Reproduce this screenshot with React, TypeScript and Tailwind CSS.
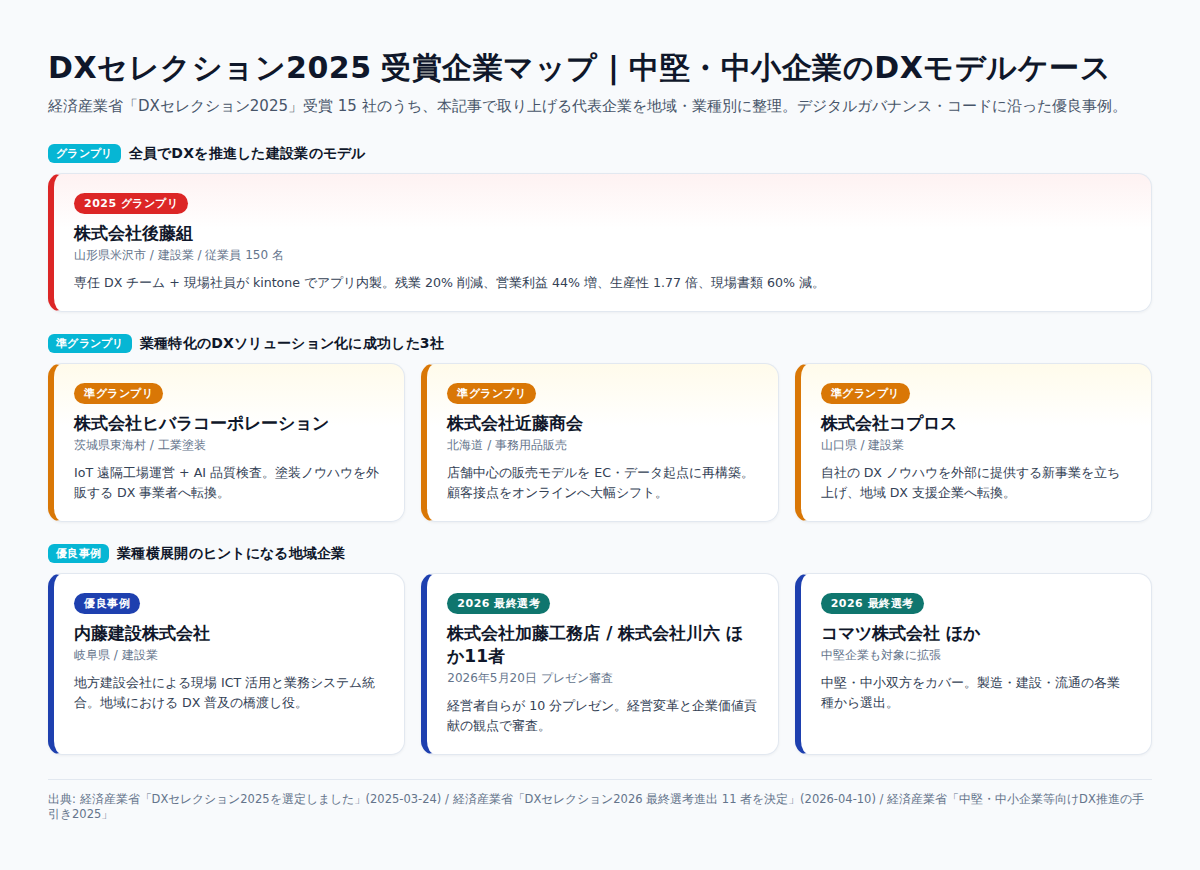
const font = 'font-["DejaVu_Sans",sans-serif]';

type Card = {
  tag: string;
  tagColor: string;
  name: string;
  meta: string;
  desc: string;
};

const finalists: Card[] = [
  {
    tag: '優良事例',
    tagColor: 'bg-[#1e40af]',
    name: '内藤建設株式会社',
    meta: '岐阜県 / 建設業',
    desc: '地方建設会社による現場 ICT 活用と業務システム統合。地域における DX 普及の橋渡し役。',
  },
  {
    tag: '2026 最終選考',
    tagColor: 'bg-[#0f766e]',
    name: '株式会社加藤工務店 / 株式会社川六 ほか11者',
    meta: '2026年5月20日 プレゼン審査',
    desc: '経営者自らが 10 分プレゼン。経営変革と企業価値貢献の観点で審査。',
  },
  {
    tag: '2026 最終選考',
    tagColor: 'bg-[#0f766e]',
    name: 'コマツ株式会社 ほか',
    meta: '中堅企業も対象に拡張',
    desc: '中堅・中小双方をカバー。製造・建設・流通の各業種から選出。',
  },
];

const runnersUp: Card[] = [
  {
    tag: '準グランプリ',
    tagColor: 'bg-[#d97706]',
    name: '株式会社ヒバラコーポレーション',
    meta: '茨城県東海村 / 工業塗装',
    desc: 'IoT 遠隔工場運営 + AI 品質検査。塗装ノウハウを外販する DX 事業者へ転換。',
  },
  {
    tag: '準グランプリ',
    tagColor: 'bg-[#d97706]',
    name: '株式会社近藤商会',
    meta: '北海道 / 事務用品販売',
    desc: '店舗中心の販売モデルを EC・データ起点に再構築。顧客接点をオンラインへ大幅シフト。',
  },
  {
    tag: '準グランプリ',
    tagColor: 'bg-[#d97706]',
    name: '株式会社コプロス',
    meta: '山口県 / 建設業',
    desc: '自社の DX ノウハウを外部に提供する新事業を立ち上げ、地域 DX 支援企業へ転換。',
  },
];

function SectionHead({ label, title }: { label: string; title: string }) {
  return (
    <div className="flex items-center gap-2 mb-2.5">
      <span className="h-[19px] rounded-md bg-[#06b6d4] px-2 text-[11px] leading-[19px] font-bold tracking-[0.3px] text-white">
        {label}
      </span>
      <h2 className="text-sm leading-[19px] font-bold tracking-[0.28px] text-[#0f172a]">{title}</h2>
    </div>
  );
}

function CompanyCard({ card, accent, tint }: { card: Card; accent: string; tint: string }) {
  return (
    <div className={`rounded-[14px] border border-[#e2e8f0] border-l-[6px] pt-[19px] pr-5 pb-[18px] pl-5 shadow-[0_1px_3px_rgba(15,23,42,0.05)] ${accent} ${tint}`}>
      <span className={`block w-fit rounded-full px-2.5 py-[3px] text-[11px] leading-[15px] font-bold tracking-[0.5px] text-white ${card.tagColor}`}>
        {card.tag}
      </span>
      <h3 className="mt-2 text-[17px] leading-[23px] font-bold text-[#0f172a]">{card.name}</h3>
      <p className="mt-px text-xs leading-[18px] text-[#64748b]">{card.meta}</p>
      <p className="mt-[9px] text-[12.6px] leading-5 text-[#334155]">{card.desc}</p>
    </div>
  );
}

export default function App() {
  return (
    <div className={`min-h-[870px] bg-[#f8fafc] px-12 pt-12 ${font}`}>
      <h1 className="text-[30px] leading-10 font-bold tracking-[0.5px] [word-spacing:-1px] text-[#0f172a]">
        DXセレクション2025 受賞企業マップ | 中堅・中小企業のDXモデルケース
      </h1>
      <p className="mt-2 text-[15px] leading-5 text-[#475569]">
        経済産業省「DXセレクション2025」受賞 15 社のうち、本記事で取り上げる代表企業を地域・業種別に整理。デジタルガバナンス・コードに沿った優良事例。
      </p>

      <section className="mt-7">
        <SectionHead label="グランプリ" title="全員でDXを推進した建設業のモデル" />
        <CompanyCard
          accent="border-l-[#dc2626]"
          tint="bg-[linear-gradient(180deg,#fef2f2_0%,#ffffff_40%)]"
          card={{
            tag: '2025 グランプリ',
            tagColor: 'bg-[#dc2626]',
            name: '株式会社後藤組',
            meta: '山形県米沢市 / 建設業 / 従業員 150 名',
            desc: '専任 DX チーム + 現場社員が kintone でアプリ内製。残業 20% 削減、営業利益 44% 増、生産性 1.77 倍、現場書類 60% 減。',
          }}
        />
      </section>

      <section className="mt-[22px]">
        <SectionHead label="準グランプリ" title="業種特化のDXソリューション化に成功した3社" />
        <div className="grid grid-cols-3 gap-4">
          {runnersUp.map((card) => (
            <CompanyCard
              key={card.name}
              card={card}
              accent="border-l-[#d97706]"
              tint="bg-[linear-gradient(180deg,#fffbeb_0%,#ffffff_40%)]"
            />
          ))}
        </div>
      </section>

      <section className="mt-[22px]">
        <SectionHead label="優良事例" title="業種横展開のヒントになる地域企業" />
        <div className="grid grid-cols-3 gap-4">
          {finalists.map((card) => (
            <CompanyCard key={card.name} card={card} accent="border-l-[#1e40af]" tint="bg-white" />
          ))}
        </div>
      </section>

      <footer className="mt-6 border-t border-[#e2e8f0] pt-3 text-[11.5px] leading-[15px] text-[#64748b]">
        出典: 経済産業省「DXセレクション2025を選定しました」(2025-03-24) / 経済産業省「DXセレクション2026 最終選考進出 11 者を決定」(2026-04-10) / 経済産業省「中堅・中小企業等向けDX推進の手引き2025」
      </footer>
    </div>
  );
}
